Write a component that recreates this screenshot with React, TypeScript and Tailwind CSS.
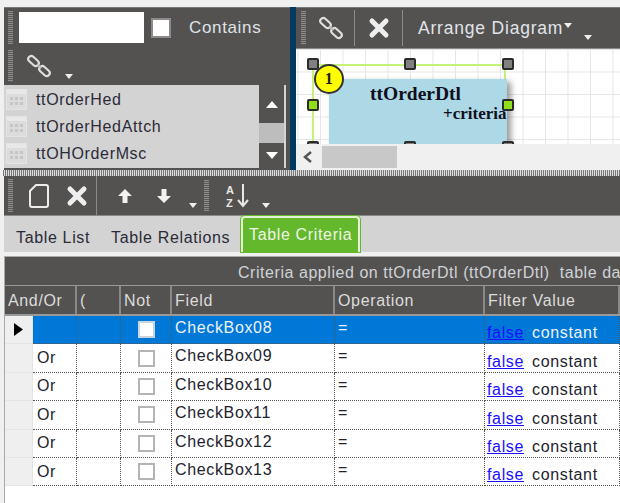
import React from 'react';

const font = "font-['Liberation_Sans',Arial,sans-serif]";

const Grip = () => <div className="w-[5px] self-stretch my-[3px] bg-[repeating-linear-gradient(to_bottom,#8f8d8b_0,#8f8d8b_1px,#5c5a58_1px,#5c5a58_2px)]" />;

const Caret = ({ className = '' }: { className?: string }) => (
  <svg width="8" height="5" viewBox="0 0 8 5" className={className}><path d="M0 0h8L4 5z" fill="#eee" /></svg>
);

const LinkIcon = () => (
  <svg width="26" height="26" viewBox="0 0 26 26" fill="none" stroke="#dedede" strokeWidth="2.2">
    <rect x="1.5" y="5" width="12" height="6" rx="3" transform="rotate(42 7.5 8)" />
    <rect x="12.5" y="15" width="12" height="6" rx="3" transform="rotate(42 18.5 18)" />
    <path d="M11 11.5l4.5 3.5" stroke="#bdbdbd" strokeWidth="2" />
  </svg>
);

const CloseIcon = () => (
  <svg width="22" height="22" viewBox="0 0 22 22"><path d="M4 4l14 14M18 4L4 18" stroke="#eee" strokeWidth="5" strokeLinecap="round" /></svg>
);

const TableIcon = () => (
  <div className="w-[21px] h-[21px] bg-[#dcdcdc] border border-[#e4e4e4] flex flex-col">
    <div className="h-[4px] bg-[#e8e8e8]" />
    <div className="grid grid-cols-3 gap-[2px] px-[3px] pt-[3px]">
      {Array.from({ length: 6 }).map((_, i) => <div key={i} className="h-[3px] bg-[#c6c6c6]" />)}
    </div>
  </div>
);

const Handle = ({ pos, green }: { pos: string; green?: boolean }) => (
  <div className={`absolute w-[12px] h-[12px] border-2 border-[#2b2b2b] rounded-[2px] ${green ? 'bg-[#8fe018]' : 'bg-[#808080]'} ${pos}`} />
);

const rows = ['CheckBox08', 'CheckBox09', 'CheckBox10', 'CheckBox11', 'CheckBox12', 'CheckBox13'];
const dotted = 'border-r border-b border-dotted border-[#555]';

export default function App() {
  return (
    <div className={`${font} w-[620px] h-[503px] bg-[#f0f0f0] overflow-hidden flex flex-col pt-[7px] pl-[4px] text-[16px] tracking-[0.65px]`}>
      {/* top panels */}
      <div className="h-[163px] flex shrink-0">
        <div className="w-[286px] flex flex-col bg-[#545250] border-t border-[#777]">
          <div className="h-[39px] flex items-center pl-[4px]">
            <Grip />
            <div className="ml-[6px] w-[125px] h-[31px] bg-white" />
            <div className="ml-[7px] w-[20px] h-[20px] bg-white border-2 border-[#8a8a8a]" />
            <span className="ml-[18px] text-[17px] text-[#dfe3e8]">Contains</span>
          </div>
          <div className="h-[38px] flex items-center pl-[4px]">
            <Grip />
            <div className="ml-[13px]"><LinkIcon /></div>
            <Caret className="ml-[13px] mt-[20px]" />
          </div>
          <div className="flex-1 flex bg-[#d3d3d3] min-h-0 mb-[2px]">
            <div className="w-[255px] flex flex-col pt-[1px] pl-[2px] text-[#2b2b38]">
              {['ttOrderHed', 'ttOrderHedAttch', 'ttOHOrderMsc'].map((t) => (
                <div key={t} className="h-[27px] flex items-center gap-[9px]"><TableIcon /><span>{t}</span></div>
              ))}
            </div>
            <div className="w-[25px] flex flex-col">
              <div className="h-[38px] bg-[#545250] flex items-center justify-center">
                <svg width="12" height="7" viewBox="0 0 12 7"><path d="M0 7L6 0l6 7z" fill="#fff" /></svg>
              </div>
              <div className="flex-1 bg-[#bdbdbd]" />
              <div className="h-[25px] bg-[#545250] flex items-center justify-center">
                <svg width="12" height="7" viewBox="0 0 12 7"><path d="M0 0h12L6 7z" fill="#fff" /></svg>
              </div>
            </div>
            <div className="w-[2px] bg-[#d3d3d3]" />
            <div className="flex-1 bg-[#545250]" />
          </div>
        </div>
        <div className="w-[6px] bg-[#003a5c]" />
        <div className="flex-1 flex flex-col min-w-0">
          <div className="h-[42px] bg-[#545250] border-t border-[#777] border-b border-b-[#8a8a8a] flex items-center pl-[5px] shrink-0">
            <Grip />
            <div className="w-[48px] flex justify-center self-stretch items-center border-r border-[#8a8a8a] my-[2px] ml-[1px]"><LinkIcon /></div>
            <div className="w-[48px] flex justify-center self-stretch items-center border-r border-[#8a8a8a] my-[2px]"><CloseIcon /></div>
            <span className="ml-[15px] text-[17.5px] tracking-[0.8px] text-[#e0e4ea] whitespace-nowrap">Arrange Diagram</span>
            <Caret className="ml-[1px] mb-[6px]" />
            <Caret className="ml-[12px] mt-[18px]" />
          </div>
          {/* diagram canvas */}
          <div className="relative flex-1 overflow-hidden bg-white bg-[linear-gradient(#e6e6e6_1px,transparent_1px),linear-gradient(90deg,#e6e6e6_1px,transparent_1px)] bg-[size:22.5px_22.5px] bg-[position:1.5px_0]">
            <div className="absolute left-[16px] top-[15px] w-[194px] h-[110px] border-2 border-[#c4f27a]" />
            <div className="absolute left-[33px] top-[30px] w-[178px] h-[70px] bg-[#add8e6] shadow-[4px_3px_6px_rgba(0,0,0,0.4)] font-['Liberation_Serif',serif] font-bold text-[#10101c] tracking-normal">
              <div className="absolute left-[41px] top-[0px] text-[19.5px] whitespace-nowrap">ttOrderDtl</div>
              <div className="absolute left-[114px] top-[22px] text-[17px] whitespace-nowrap">+criteria</div>
            </div>
            <div className="absolute left-[18px] top-[15px] w-[30px] h-[30px] rounded-full bg-[#ffff00] border-2 border-[#333] flex items-center justify-center font-['Liberation_Serif',serif] font-bold text-[#222] text-[16px] z-10">1</div>
            <Handle pos="left-[11px] top-[9px]" />
            <Handle pos="left-[108px] top-[9px]" />
            <Handle pos="left-[206px] top-[9px]" />
            <Handle pos="left-[11px] top-[50px]" green />
            <Handle pos="left-[206px] top-[50px]" green />
            <Handle pos="left-[11px] top-[92px]" />
            <Handle pos="left-[108px] top-[92px]" />
            <Handle pos="left-[206px] top-[92px]" />
            <div className="absolute left-0 right-0 bottom-0 h-[26px] bg-[#f0f0f0] flex items-center">
              <svg width="26" height="16" viewBox="0 0 26 16" fill="none"><path d="M15 3l-6 5 6 5" stroke="#555" strokeWidth="2.5" /></svg>
              <div className="w-[75px] h-[22px] bg-[#c8c8c8]" />
            </div>
          </div>
        </div>
      </div>

      {/* splitter */}
      <div className="h-[6px] shrink-0 -ml-[1px] bg-[repeating-linear-gradient(90deg,#777_0,#777_1px,#ddd_1px,#ddd_2px)]" />

      {/* lower toolbar */}
      <div className="h-[40px] shrink-0 bg-[#545250] flex items-center pl-[4px] border-b border-[#8a8a8a]">
        <Grip />
        <svg width="22" height="26" viewBox="0 0 22 26" fill="none" stroke="#ececec" strokeWidth="2" className="ml-[15px]">
          <path d="M8 2h10a2 2 0 0 1 2 2v18a2 2 0 0 1-2 2H4a2 2 0 0 1-2-2V8z" />
        </svg>
        <div className="ml-[12px] w-[30px] flex justify-center"><CloseIcon /></div>
        <div className="ml-[4px] self-stretch w-px bg-[#8a8a8a]" />
        <svg width="14" height="14" viewBox="0 0 14 14" className="ml-[21px]"><path d="M7 0l7 7H9.5v7h-5V7H0z" fill="#f2f2f2" /></svg>
        <svg width="14" height="14" viewBox="0 0 14 14" className="ml-[25px]"><path d="M7 14L0 7h4.5V0h5v7H14z" fill="#f2f2f2" /></svg>
        <Caret className="ml-[18px] mt-[20px]" />
        <div className="ml-[7px] self-stretch flex py-[1px]"><Grip /></div>
        <div className="ml-[17px] relative h-[24px] w-[26px] text-[#e8e8e8]">
          <span className="absolute left-0 top-[1px] text-[11px] font-bold leading-[10px] tracking-normal">A</span>
          <span className="absolute left-0 top-[14px] text-[11px] font-bold leading-[10px] tracking-normal">Z</span>
          <svg width="12" height="24" viewBox="0 0 12 24" className="absolute left-[11px] top-0" fill="none" stroke="#e8e8e8" strokeWidth="2"><path d="M6 0v22M1 16l5 6 5-6" /></svg>
        </div>
        <Caret className="ml-[10px] mt-[20px]" />
      </div>

      {/* tabs */}
      <div className="h-[36px] shrink-0 bg-[#d3d3d3] flex items-start text-[#2b2b38] relative">
        <span className="ml-[12px] mt-[10px]">Table List</span>
        <span className="ml-[21px] mt-[10px]">Table Relations</span>
        <div className="absolute left-[237px] top-[0px] w-[119px] h-[36px] bg-[#63b82b] border-2 border-b-0 border-[#e6f2d8] rounded-t-[4px] text-[#eef5e6] pl-[6px] pt-[5px] whitespace-nowrap shadow-[0_0_0_1px_#63b82b]">Table Criteria</div>
      </div>

      {/* criteria table */}
      <div className="mt-[4px] flex-1 border-l border-t border-[#aaa] bg-white min-h-0">
        <div className="h-[29px] bg-[#545250] text-[#cfd3d8] tracking-[0.55px] flex items-center pt-[3px] pl-[233px] whitespace-nowrap overflow-hidden border-b border-[#999]">Criteria applied on ttOrderDtl (ttOrderDtl)&nbsp; table data</div>
        <div className="grid grid-cols-[72px_44px_51px_163px_150px_1fr] h-[30px] bg-[#545250] text-[#dcdcdc] border-b-2 border-[#999]">
          {['And/Or', '(', 'Not', 'Field', 'Operation', 'Filter Value'].map((h) => (
            <div key={h} className="border-r-2 border-[#8a8a8a] pl-[3px] pt-[2px] flex items-center">{h}</div>
          ))}
        </div>
        {rows.map((f, i) => {
          const sel = i === 0;
          const text = sel ? 'text-[#eef2f8]' : 'text-[#23232e]';
          const cell = `${dotted} ${sel ? 'bg-[#0078d7] border-[#9cc4e8]' : ''}`;
          return (
            <div key={f} className={`grid grid-cols-[28px_44px_44px_51px_163px_150px_1fr] h-[28.4px] ${text}`}>
              <div className="bg-[#efefef] border-r border-b border-[#e4e4e4] flex items-center justify-center">
                {sel && <svg width="9" height="13" viewBox="0 0 9 13"><path d="M0 0l9 6.5L0 13z" fill="#000" /></svg>}
              </div>
              <div className={`${cell} pl-[4px] flex items-center`}>{sel ? '' : 'Or'}</div>
              <div className={cell} />
              <div className={`${cell} flex items-center justify-center`}>
                <div className={`w-[17px] h-[17px] border-2 ${sel ? 'bg-white border-[#c8d4e0]' : 'bg-white border-[#b4b4b4]'}`} />
              </div>
              <div className={`${cell} pl-[3px] pt-[2px] leading-[20px]`}>{f}</div>
              <div className={`${cell} pl-[3px] pt-[2px] leading-[20px]`}>=</div>
              <div className={`${cell} pl-[2px] flex items-end gap-[8px] whitespace-nowrap overflow-hidden leading-[18px] pb-[1px]`}>
                <span className="underline text-[#1a0dff]">false</span><span>constant</span>
              </div>
            </div>
          );
        })}
      </div>
    </div>
  );
}
